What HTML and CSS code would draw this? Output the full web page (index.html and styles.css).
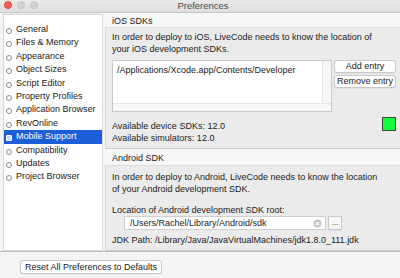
FILE: index.html
```html
<!DOCTYPE html>
<html>
<head>
<meta charset="utf-8">
<link rel="stylesheet" href="styles.css">
</head>
<body>
<div class="window">
  <div class="titlebar">
    <div class="lights">
      <span class="light red"></span>
      <span class="light"></span>
      <span class="light"></span>
    </div>
    <div class="title">Preferences</div>
  </div>
  <div class="main">
    <ul class="sidebar">
      <li class="item">General</li>
      <li class="item">Files &amp; Memory</li>
      <li class="item">Appearance</li>
      <li class="item">Object Sizes</li>
      <li class="item">Script Editor</li>
      <li class="item">Property Profiles</li>
      <li class="item">Application Browser</li>
      <li class="item">RevOnline</li>
      <li class="item selected">Mobile Support</li>
      <li class="item">Compatibility</li>
      <li class="item">Updates</li>
      <li class="item">Project Browser</li>
    </ul>
    <div class="content">
      <div class="section-head">iOS SDKs</div>
      <div class="group ios">
        <p class="desc">In order to deploy to iOS, LiveCode needs to know the location of<br>your iOS development SDKs.</p>
        <div class="list-row">
          <div class="listbox">
            <div class="list-body">
              <div class="list-items">
                <div class="list-item">/Applications/Xcode.app/Contents/Developer</div>
              </div>
              <div class="vscroll"></div>
            </div>
            <div class="hscroll"></div>
          </div>
          <div class="btn-col">
            <button class="btn small">Add entry</button>
            <button class="btn small">Remove entry</button>
          </div>
        </div>
        <div class="avail-row">
          <div class="avail">Available device SDKs: 12.0<br>Available simulators: 12.0</div>
          <span class="status"></span>
        </div>
      </div>
      <div class="section-head android-head">Android SDK</div>
      <div class="group android">
        <p class="desc">In order to deploy to Android, LiveCode needs to know the location<br>of your Android development SDK.</p>
        <div class="label">Location of Android development SDK root:</div>
        <div class="input-row">
          <div class="input">
            <span class="input-text">/Users/Rachel/Library/Android/sdk</span>
            <svg class="clear" width="9" height="9" viewBox="0 0 9 9">
              <circle cx="4.5" cy="4.5" r="4" fill="#c4c4c4"/>
              <path d="M2.9 2.9 L6.1 6.1 M6.1 2.9 L2.9 6.1" stroke="#fff" stroke-width="1.1"/>
            </svg>
          </div>
          <button class="btn dots">...</button>
        </div>
        <div class="jdk">JDK Path: /Library/Java/JavaVirtualMachines/jdk1.8.0_111.jdk</div>
      </div>
    </div>
  </div>
  <div class="footer">
    <button class="btn reset">Reset All Preferences to Defaults</button>
  </div>
</div>
</body>
</html>
```

FILE: styles.css
```css
* { box-sizing: border-box; }
html, body {
  margin: 0;
  padding: 0;
  width: 400px;
  height: 278px;
  overflow: hidden;
  background: #f3f3f3;
}
body {
  font-family: "Liberation Sans", Arial, sans-serif;
  font-size: 9px;
  color: #222;
}
.window {
  width: 400px;
  height: 278px;
  display: flex;
  flex-direction: column;
  background: #f4f4f4;
}
.titlebar {
  height: 13px;
  flex: none;
  position: relative;
  background: linear-gradient(#e9e9e9, #dedede);
  border-bottom: 1px solid #c6c6c6;
  display: flex;
  align-items: center;
  justify-content: center;
}
.lights {
  position: absolute;
  left: 4px;
  top: 1px;
  display: flex;
  gap: 5px;
}
.light {
  width: 8px;
  height: 8px;
  border-radius: 50%;
  background: #d3d3d3;
  border: 0.5px solid #c4c4c4;
}
.light.red {
  background: #fc5f58;
  border-color: #e0463f;
}
.title {
  color: #4e4e4e;
  font-size: 9.5px;
  margin-top: -2px;
  margin-left: 6px;
}
.main {
  height: 238px;
  flex: none;
  display: flex;
}
.sidebar {
  list-style: none;
  margin: 1px 0 0 3px;
  padding: 8px 0 0 0;
  width: 100px;
  height: 237px;
  background: #fff;
  border: 1px solid #d6d6d6;
}
.item {
  height: 13.4px;
  line-height: 13.4px;
  padding-left: 12px;
  position: relative;
  white-space: nowrap;
}
.item::before {
  content: "";
  position: absolute;
  left: 2px;
  top: 5px;
  width: 4px;
  height: 4px;
  border-radius: 50%;
  border: 1px solid #8a8a8a;
}
.item.selected {
  background: #1b5ed8;
  color: #fff;
}
.item.selected::before {
  border-color: #fff;
  background: #c9d6f4;
  border-radius: 1px;
}
.content {
  flex: 1;
  margin-left: 2px;
  display: flex;
  flex-direction: column;
}
.section-head {
  height: 14px;
  line-height: 17px;
  padding-left: 7px;
  background: #f7f7f7;
}
.android-head {
  height: 16px;
  line-height: 18px;
}
.group {
  background: #ebebeb;
  border-left: 1px solid #d9d9d9;
  border-top: 1px solid #dedede;
  border-bottom: 1px solid #c9c9c9;
  padding-left: 6px;
}
.ios {
  height: 122px;
  padding-top: 3px;
}
.android {
  height: 86px;
  padding-top: 5px;
}
.desc {
  margin: 0;
  line-height: 12px;
  white-space: nowrap;
}
.list-row {
  display: flex;
  margin-top: 5px;
}
.listbox {
  width: 220px;
  height: 52px;
  background: #fff;
  border: 1px solid #c9c9c9;
  display: flex;
  flex-direction: column;
}
.list-body {
  flex: 1;
  display: flex;
}
.list-items {
  flex: 1;
  padding: 3px 0 0 4px;
}
.list-item {
  line-height: 12px;
}
.vscroll {
  width: 9px;
  background: #f7f7f7;
  border-left: 1px solid #e6e6e6;
}
.hscroll {
  height: 8px;
  background: #f7f7f7;
  border-top: 1px solid #e6e6e6;
}
.btn-col {
  display: flex;
  flex-direction: column;
  gap: 2px;
  margin-left: 2px;
}
.btn {
  font-family: "Liberation Sans", Arial, sans-serif;
  font-size: 9px;
  color: #222;
  background: #fff;
  border: 1px solid #c8c8c8;
  border-radius: 3px;
  padding: 0;
  margin: 0;
  box-shadow: 0 0.5px 0 rgba(0,0,0,0.08);
}
.btn.small {
  width: 62px;
  height: 13px;
  line-height: 11px;
}
.avail-row {
  display: flex;
  align-items: flex-start;
  margin-top: 5px;
}
.avail {
  flex: 1;
  line-height: 12px;
  margin-top: 3px;
}
.status {
  width: 14px;
  height: 14px;
  background: #12ff3c;
  border: 1px solid #3a4a3a;
  margin-right: 4px;
}
.label {
  margin-top: 10px;
  line-height: 11px;
}
.input-row {
  display: flex;
  margin-left: 12px;
}
.input {
  width: 202px;
  height: 14px;
  background: #fff;
  border: 1px solid #cfcfcf;
  display: flex;
  align-items: center;
  padding: 0 3px 0 5px;
}
.input-text {
  flex: 1;
}
.clear {
  display: block;
}
.btn.dots {
  width: 14px;
  height: 14px;
  margin-left: 2px;
  border-radius: 1px;
  line-height: 10px;
  font-size: 8px;
  background: #f6f6f6;
}
.jdk {
  margin-top: 4px;
  line-height: 12px;
  white-space: nowrap;
}
.footer {
  flex: 1;
  border-top: 1px solid #bdbdbd;
  padding: 8px 0 0 20px;
  background: #f4f4f4;
}
.btn.reset {
  height: 14px;
  width: 142px;
  line-height: 12px;
}
```
